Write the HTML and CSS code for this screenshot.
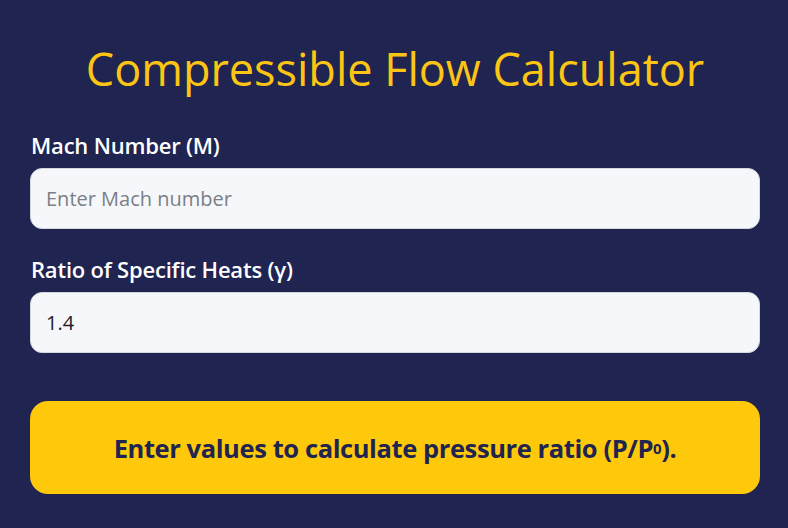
FILE: index.html
```html
<!DOCTYPE html>
<html>
<head>
<meta charset="utf-8">
<link rel="stylesheet" href="styles.css">
</head>
<body>
<div class="calc">
  <h1 class="title">Compressible Flow Calculator</h1>
  <div class="field">
    <label class="label">Mach Number (M)</label>
    <input class="input" type="text" placeholder="Enter Mach number">
  </div>
  <div class="field">
    <label class="label">Ratio of Specific Heats (γ)</label>
    <input class="input" type="text" value="1.4">
  </div>
  <div class="result">Enter values to calculate pressure ratio (P/P<sub>0</sub>).</div>
</div>
</body>
</html>
```
FILE: styles.css
```css
html, body {
  margin: 0;
  padding: 0;
  background: #1f2450;
  height: 100%;
}
body {
  font-family: "Open Sans", "Noto Sans", sans-serif;
}
.calc {
  padding: 42px 28px 0 30px;
  display: flex;
  flex-direction: column;
}
.title {
  margin: 0 0 37px;
  font-size: 45px;
  line-height: 54px;
  font-weight: 400;
  color: #fcc514;
  text-align: center;
}
.field {
  display: flex;
  flex-direction: column;
  margin-bottom: 28px;
}
.label {
  font-size: 22px;
  line-height: 24px;
  font-weight: 600;
  color: #ffffff;
  margin: 0 0 11px 1px;
  letter-spacing: -0.2px;
}
.input {
  box-sizing: border-box;
  height: 61px;
  padding: 0 15px;
  border: 1px solid #d4d7de;
  border-radius: 12px;
  background: #f5f7fa;
  font-family: inherit;
  font-size: 20px;
  color: #222;
  outline: none;
}
.input::placeholder {
  color: #7b7f86;
}
.result {
  margin-top: 20px;
  height: 93px;
  border-radius: 18px;
  background: #fec90b;
  color: #1f2450;
  font-size: 25.5px;
  font-weight: 700;
  display: flex;
  align-items: center;
  justify-content: center;
  letter-spacing: -0.4px;
}
.result sub {
  font-size: 15px;
  vertical-align: -4px;
  line-height: 0;
}
```
